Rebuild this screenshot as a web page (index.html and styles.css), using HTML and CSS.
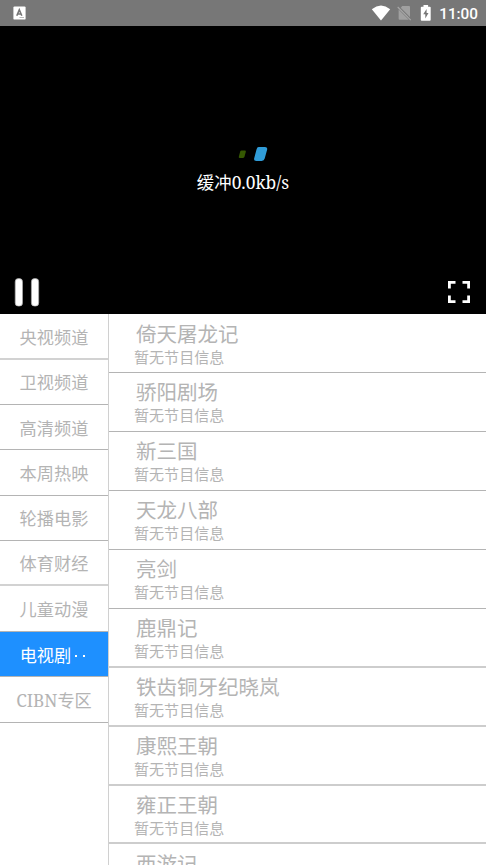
FILE: index.html
```html
<!DOCTYPE html>
<html lang="zh-CN">
<head>
<meta charset="utf-8">
<title>电视直播</title>
<link rel="stylesheet" href="styles.css">
</head>
<body>
<header class="status">
  <svg class="app-icon" width="13" height="14" viewBox="0 0 13 14"><rect x=".4" y=".4" width="12.2" height="13.2" rx="1.2" fill="#fff"/><path d="M3.8 9.8 6.3 3.8 8.8 9.8M4.7 8h3.2" fill="none" stroke="#777" stroke-width="1.6"/><path d="M6.5 11.5h4.5" stroke="#aaa" stroke-width=".8"/></svg>
  <svg class="wifi" width="20" height="16" viewBox="0 0 20 16"><path d="M.8 4.2Q10-3 19.2 4.2L10 15.6Z" fill="#fff"/></svg>
  <svg class="sim" width="15" height="16" viewBox="0 0 15 16"><path d="M5.2 1H12a1 1 0 0 1 1 1v10.4L3.6 3Z" fill="#a0a0a0"/><path d="M1.6 4.6 11.8 14.8H2.6a1 1 0 0 1-1-1Z" fill="#a0a0a0"/><path d="M1.5 1.4 14.4 14.3" stroke="#777" stroke-width="1.2"/><path d="M.7 2 13.8 15.1" stroke="#a8a8a8" stroke-width="1.1"/></svg>
  <svg class="battery" width="12" height="16" viewBox="0 0 12 16"><path d="M3.5 0h4.6v1.7h1.7q.9 0 .9.9v12.2q0 .9-.9.9H1.7q-.9 0-.9-.9V2.6q0-.9.9-.9h1.8Z" fill="#fff"/><path d="M6.6 3.9 3.2 9.3h2.1v4.2L8.5 8H6.6Z" fill="#777"/></svg>
  <span class="clock">11:00</span>
</header>
<section class="player">
  <div class="buffering">
    <svg width="32" height="18" viewBox="0 0 32 18"><path d="M4.6 5.6H7.9Q9.1 5.6 8.8 6.8L7.5 11.8Q7.2 12.9 6.1 12.9H2.8Q1.5 12.9 1.8 11.7L3.2 6.6Q3.5 5.6 4.6 5.6Z" fill="#355802"/><path d="M21.7 2.1H28Q30.8 2.1 30.1 4.7L27.7 13.5Q27.1 15.9 24.7 15.9H19.3Q16.5 15.9 17.2 13.3L19.5 4.5Q20.1 2.1 21.7 2.1Z" fill="#309cd8"/></svg>
    <p class="speed">缓冲0.0kb/s</p>
  </div>
  <div class="controls">
    <svg width="26" height="29" viewBox="0 0 26 29"><g fill="#fff" stroke="#aaa" stroke-width=".7"><rect x="1.2" y=".6" width="7.3" height="27.5" rx="3.2"/><rect x="17.4" y=".6" width="7.3" height="27.5" rx="3.2"/></g></svg>
    <svg class="expand" width="22" height="22" viewBox="0 0 22 22"><path d="M1.4 7.5v-6.1h6.1M14.5 1.4h6.1v6.1M20.6 14.5v6.1h-6.1M7.5 20.6h-6.1v-6.1" fill="none" stroke="#fff" stroke-width="2.8"/></svg>
  </div>
</section>
<main class="lists">
  <nav class="categories">
    <a>央视频道</a><a>卫视频道</a><a>高清频道</a><a>本周热映</a><a>轮播电影</a><a>体育财经</a><a>儿童动漫</a><a class="active">电视剧<span class="dots"><i></i><i></i></span></a><a>CIBN专区</a>
  </nav>
  <div class="channels">
    <article><h2>倚天屠龙记</h2><p>暂无节目信息</p></article>
    <article><h2>骄阳剧场</h2><p>暂无节目信息</p></article>
    <article><h2>新三国</h2><p>暂无节目信息</p></article>
    <article><h2>天龙八部</h2><p>暂无节目信息</p></article>
    <article><h2>亮剑</h2><p>暂无节目信息</p></article>
    <article><h2>鹿鼎记</h2><p>暂无节目信息</p></article>
    <article><h2>铁齿铜牙纪晓岚</h2><p>暂无节目信息</p></article>
    <article><h2>康熙王朝</h2><p>暂无节目信息</p></article>
    <article><h2>雍正王朝</h2><p>暂无节目信息</p></article>
    <article><h2>西游记</h2><p>暂无节目信息</p></article>
  </div>
</main>
</body>
</html>
```
FILE: styles.css
```css
* { box-sizing: border-box; margin: 0; padding: 0; }
body {
  width: 486px;
  height: 865px;
  overflow: hidden;
  display: flex;
  flex-direction: column;
  background: #fff;
  font-family: "Noto Serif", "DejaVu Serif Condensed", "Noto Sans CJK SC", serif;
}
.status {
  height: 26px;
  flex: none;
  display: flex;
  align-items: center;
  padding: 0 8px 0 13px;
  background: #777;
}
.wifi { margin-left: auto; margin-right: 6px; }
.sim { margin-right: 8px; }
.battery { margin-right: 7px; }
.clock { font: 500 15.3px/26px Roboto, sans-serif; color: #fff; padding-top: 2px; }
.player {
  height: 288px;
  flex: none;
  display: flex;
  flex-direction: column;
  justify-content: space-between;
  background: #000;
  padding: 119px 16px 7px 14px;
}
.buffering { display: flex; flex-direction: column; align-items: center; }
.buffering svg { margin-left: 21px; }
.speed { color: #fff; font-size: 17.4px; line-height: 26px; margin-top: 6px; padding-left: 2px; }
.controls { display: flex; justify-content: space-between; align-items: center; }
.expand { margin-bottom: 1px; }
.lists { flex: 1; min-height: 0; display: flex; overflow: hidden; color: #b4b4b4; }
.categories { width: 109px; flex: none; border-right: 1px solid #d0d0d0; }
.categories a {
  height: 45.42px;
  display: flex;
  align-items: center;
  justify-content: center;
  border-bottom: 1px solid #b4b4b4;
  padding-top: 3px;
  font-size: 17.2px;
  line-height: 26px;
}
.categories a:nth-child(1) { height: 46px; border-bottom: 2px solid #d2d2d2; }
.categories a:nth-child(2) { height: 44.84px; padding-top: 2px; }
.categories a:nth-child(6) { border-bottom: 2px solid #d2d2d2; }
.categories .active { background: #1e90ff; color: #fff; }
.dots { width: 17.1px; display: flex; justify-content: space-around; }
.dots i { width: 2px; height: 2px; background: #fff; }
.channels { flex: 1; }
.channels article {
  height: 58.95px;
  padding: 5.55px 0 0 25px;
  border-bottom: 1px solid #b4b4b4;
}
.channels article:nth-child(n+6) { border-bottom: 2px solid #cdcdcd; }
.channels h2 { font-size: 20.5px; font-weight: 400; line-height: 28px; padding-left: 2px; }
.channels p { font-size: 15.05px; line-height: 20px; margin-top: -1px; }
```
